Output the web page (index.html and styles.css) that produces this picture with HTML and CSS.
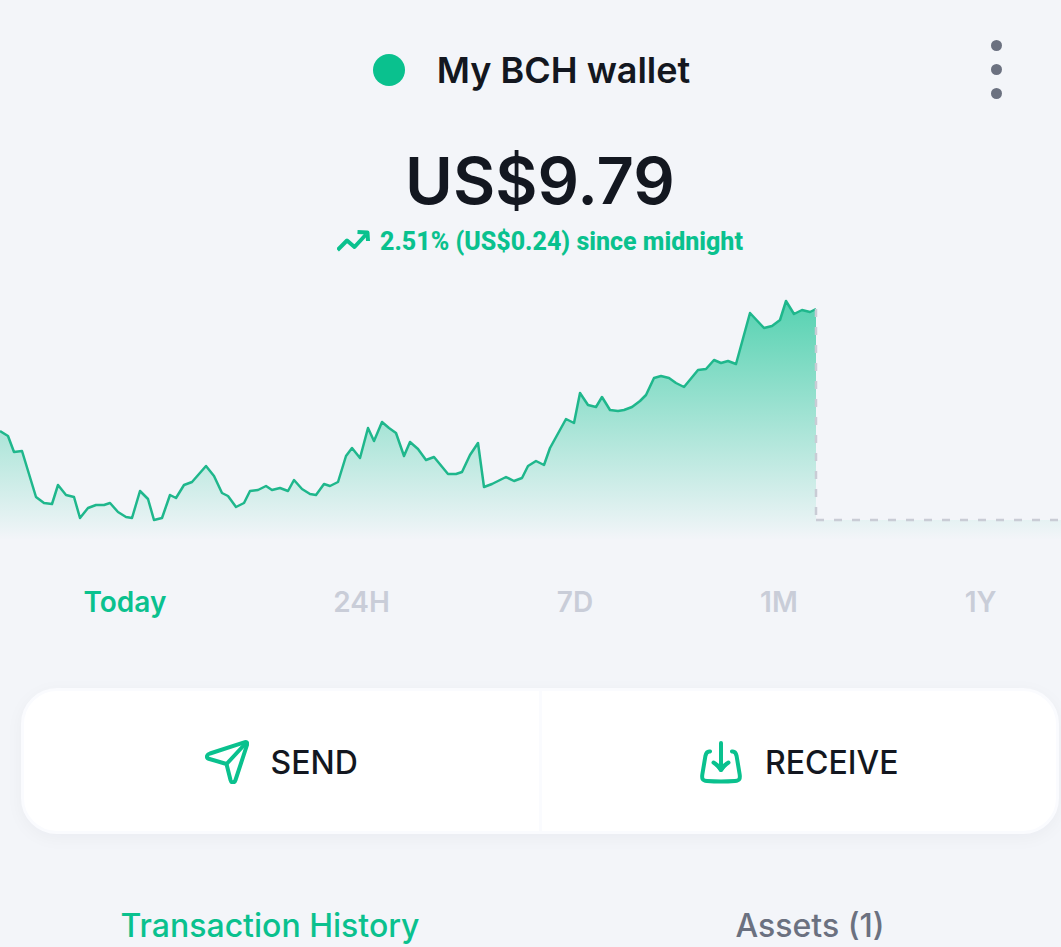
FILE: index.html
```
<!DOCTYPE html>
<html lang="en">
    <head>
        <meta charset="utf-8">
        <meta name="viewport" content="width=device-width, initial-scale=1">
        <title>My BCH wallet</title>
        <link rel="stylesheet" href="styles.css">
    </head>

    <body>
        <main class="wallet">

            <!-- Wallet name and menu -->
            <header class="header">
                <div class="walletName">
                    <span class="walletDot"></span>
                    <h1>My BCH wallet</h1>
                </div>
                <button class="menuButton" aria-label="Menu">
                    <span class="menuDot"></span>
                    <span class="menuDot"></span>
                    <span class="menuDot"></span>
                </button>
            </header>

            <!-- Balance -->
            <section class="balance">
                <p class="amount">US$9.79</p>
                <p class="change">
                    <svg class="trendIcon" viewBox="0 0 32 24" aria-hidden="true">
                        <path d="M0 20 L9.500 10.500 L17 17 L28.500 4.500" />
                        <path d="M20 2 L30 2.500 L30.500 11" />
                    </svg>
                    2.51% (US$0.24) since midnight
                </p>
            </section>

            <!-- Price chart -->
            <svg class="chart" viewBox="0 290 1080 260" role="img" aria-label="Price today">
                <defs>
                    <linearGradient id="chartFill" gradientUnits="userSpaceOnUse" x1="0" y1="300" x2="0" y2="540">
                        <stop offset="0" stop-color="#0ac18e" stop-opacity="0.68" />
                        <stop offset="0.9" stop-color="#0ac18e" stop-opacity="0.07" />
                        <stop offset="1" stop-color="#0ac18e" stop-opacity="0" />
                    </linearGradient>
                </defs>
                <path class="chartArea" d="M0 431 L8 436 14 452 22 451 36 497 44 503 52 504 58 485 66 495 74 497 80 518 88 508 96 505 104 505 110 503 118 512 126 517 132 518 140 491 148 499 154 520 162 518 170 495 176 498 184 485 192 482 206 466 214 476 222 493 228 496 236 507 244 503 250 491 258 490 266 486 272 490 280 488 288 491 294 480 302 489 310 494 316 495 324 484 330 486 338 482 346 456 352 448 360 458 368 428 374 441 382 422 389 428 396 433 404 456 410 442 418 449 426 460 434 457 448 474 456 474 462 472 470 455 478 443 484 487 492 484 506 477 514 481 522 478 528 466 536 461 544 465 550 448 566 419 574 423 580 393 588 405 596 407 602 397 610 410 618 411 624 410 632 407 640 401 646 395 654 378 661 376 669 378 676 383 684 387 698 370 706 369 714 360 721 363 728 361 736 364 750 313 764 328 772 326 780 320 786 301 794 314 802 310 810 312 816 309 V520 H1080 V540 H0 Z" />
                <path class="chartLine" d="M0 431 L8 436 14 452 22 451 36 497 44 503 52 504 58 485 66 495 74 497 80 518 88 508 96 505 104 505 110 503 118 512 126 517 132 518 140 491 148 499 154 520 162 518 170 495 176 498 184 485 192 482 206 466 214 476 222 493 228 496 236 507 244 503 250 491 258 490 266 486 272 490 280 488 288 491 294 480 302 489 310 494 316 495 324 484 330 486 338 482 346 456 352 448 360 458 368 428 374 441 382 422 389 428 396 433 404 456 410 442 418 449 426 460 434 457 448 474 456 474 462 472 470 455 478 443 484 487 492 484 506 477 514 481 522 478 528 466 536 461 544 465 550 448 566 419 574 423 580 393 588 405 596 407 602 397 610 410 618 411 624 410 632 407 640 401 646 395 654 378 661 376 669 378 676 383 684 387 698 370 706 369 714 360 721 363 728 361 736 364 750 313 764 328 772 326 780 320 786 301 794 314 802 310 810 312 816 309" />
                <path class="chartRest" d="M816 309 V520" />
                <path class="chartRest" d="M816 520 H1080" />
            </svg>

            <!-- Chart range -->
            <nav class="ranges">
                <button class="range active">Today</button>
                <button class="range">24H</button>
                <button class="range">7D</button>
                <button class="range">1M</button>
                <button class="range">1Y</button>
            </nav>

            <!-- Send and receive -->
            <div class="actions">
                <button class="action">
                    <svg class="actionIcon" viewBox="0 0 44 44" aria-hidden="true">
                        <path d="M40 2.200 L5 13.500 C1 15 1 18 4.500 19 L21.500 24 L25.500 40 C26.500 43.500 29.500 43 30.500 40 L42 5 C42.500 3 42 1.600 40 2.200 Z" />
                        <path d="M21.500 24 L41 3" />
                    </svg>
                    SEND
                </button>
                <button class="action">
                    <svg class="actionIcon" viewBox="0 0 44 44" aria-hidden="true">
                        <path d="M11 11.500 C8 11 7 13 6.400 16 L3.400 34 C2.600 39 3.500 40.600 8 41 Q22 42 36 41 C40.500 40.600 41.400 39 40.600 34 L37.600 16 C37 13 36 11 33 11.500" />
                        <path d="M22 3 V29 M14.500 22.500 Q20 26 22 30 Q24 26 29.500 22.500" />
                        <path d="M18 25 L22 30 L26 25" />
                    </svg>
                    RECEIVE
                </button>
            </div>

            <nav class="tabs">
                <button class="tab active">Transaction History</button>
                <button class="tab">Assets (1)</button>
            </nav>
        </main>
    </body>
</html>
```

FILE: styles.css
```
body{
    margin: 0;
    overflow: hidden;
    background: #f3f5f9;
    color: #131720;
    font-family: Inter, "Liberation Sans", sans-serif;
}

h1, p{
    margin: 0;
}

button{
    padding: 0;
    border: none;
    background: none;
    color: inherit;
    font-family: inherit;
    cursor: pointer;
}

/* runs slightly past the right edge */
.wallet{
    margin-right: -19px;
    padding-top: 40px;
}

/* Header */

.header{
    display: flex;
    align-items: center;
    padding: 0 78px 0 72px;
}

.walletName{
    flex: 1;
    display: flex;
    align-items: center;
    justify-content: center;
    gap: 32px;
}

.walletDot{
    width: 32px;
    height: 32px;
    border-radius: 50%;
    background: #0ac18e;
}

.walletName h1{
    font-size: 36px;
    line-height: 58px;
    font-weight: 600;
}

.menuButton{
    display: flex;
    flex-direction: column;
    gap: 13px;
}

.menuDot{
    width: 11px;
    height: 11px;
    border-radius: 50%;
    background: #6b7180;
}

/* Balance */

.balance{
    padding-top: 40px;
    text-align: center;
}

.amount{
    font-size: 65px;
    line-height: 83px;
    font-weight: 600;
}

.change{
    display: flex;
    align-items: center;
    justify-content: center;
    gap: 10px;
    color: #0ac18e;
    font-family: Roboto, "Liberation Sans", sans-serif;
    font-size: 25px;
    line-height: 40px;
    font-weight: 800;
}

.trendIcon{
    width: 33px;
    height: 24px;
    fill: none;
    stroke: #0ac18e;
    stroke-width: 4;
    stroke-linejoin: round;
}

/* Chart */

.chart{
    display: block;
    width: 100%;
    margin-top: 28px;
}

.chartArea{
    fill: url(#chartFill);
}

.chartLine{
    fill: none;
    stroke: #1fb78c;
    stroke-width: 2.5;
    stroke-linejoin: round;
}

.chartRest{
    fill: none;
    stroke: #c9ccd5;
    stroke-width: 2.5;
    stroke-dasharray: 8 10;
}

.ranges{
    display: flex;
    justify-content: space-around;
    padding-top: 32px;
}

.range{
    color: #c9cdd8;
    font-size: 28px;
    line-height: 40px;
    font-weight: 600;
}

/* Send / receive */

.actions{
    display: flex;
    margin: 66px 21px 0;
    border: 3px solid #fafbfe;
    border-radius: 36px;
    background: #fff;
    box-shadow: 0 4px 18px rgba(20, 30, 60, 0.04);
}

.action{
    flex: 1;
    display: flex;
    align-items: center;
    justify-content: center;
    gap: 22px;
    height: 140px;
    padding-top: 2px;
    font-size: 32px;
    font-weight: 500;
}

.action + .action{
    border-left: 3px solid #fafbfe;
}

.actionIcon{
    width: 44px;
    height: 44px;
    fill: none;
    stroke: #0ac18e;
    stroke-width: 4;
    stroke-linecap: round;
    stroke-linejoin: round;
}

/* Tabs */

.tabs{
    display: flex;
    padding-top: 72px;
}

.tab{
    flex: 1;
    color: #6b7180;
    font-size: 32px;
    line-height: 40px;
    font-weight: 500;
}

.active{
    color: #0ac18e;
}
```
